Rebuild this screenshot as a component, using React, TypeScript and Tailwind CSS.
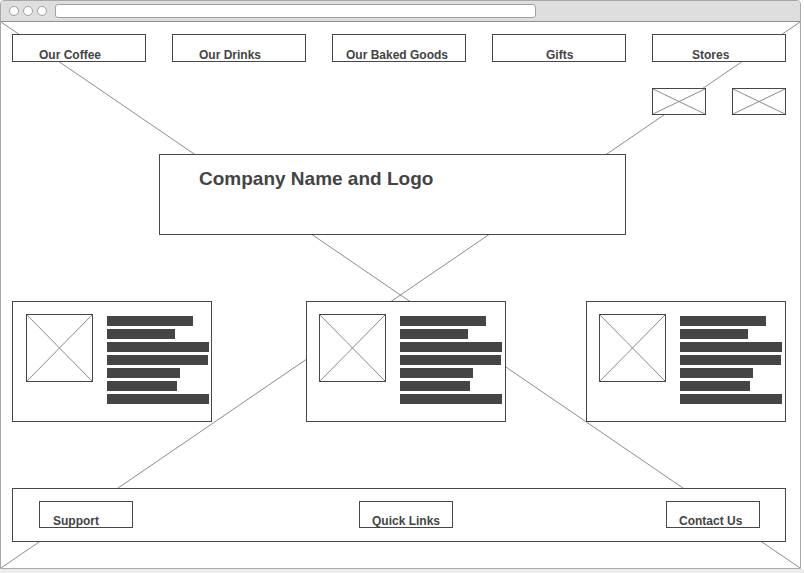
import React from "react";

const font = { fontFamily: '"Liberation Sans", Arial, Helvetica, sans-serif' };

function XBox({ className }: { className: string }) {
  return (
    <div className={`relative border border-[#474747] bg-white ${className}`}>
      <svg className="absolute inset-0 h-full w-full" viewBox="0 0 100 100" preserveAspectRatio="none">
        <line x1="0" y1="0" x2="100" y2="100" stroke="#8a8a8a" strokeWidth="1" vectorEffect="non-scaling-stroke" />
        <line x1="100" y1="0" x2="0" y2="100" stroke="#8a8a8a" strokeWidth="1" vectorEffect="non-scaling-stroke" />
      </svg>
    </div>
  );
}

const navItems: { label: string; pl: string }[] = [
  { label: "Our Coffee", pl: "pl-[26px]" },
  { label: "Our Drinks", pl: "pl-[26px]" },
  { label: "Our Baked Goods", pl: "pl-[13px]" },
  { label: "Gifts", pl: "pl-[53px]" },
  { label: "Stores", pl: "pl-[39px]" },
];

const barWidths = ["w-[86px]", "w-[68px]", "w-[102px]", "w-[101px]", "w-[73px]", "w-[70px]", "w-[102px]"];

function Card({ className, imgMl }: { className: string; imgMl: string }) {
  return (
    <div className={`flex h-[121px] w-[200px] border border-[#474747] bg-white ${className}`}>
      <XBox className={`${imgMl} mt-[12px] h-[68px] w-[67px]`} />
      <div className="ml-[14px] mt-[14px] flex flex-col gap-[3px]">
        {barWidths.map((w, i) => (
          <div key={i} className={`h-[10px] bg-[#454545] ${w}`} />
        ))}
      </div>
    </div>
  );
}

function FooterBtn({ label, pl, className }: { label: string; pl: string; className?: string }) {
  return (
    <div
      className={`h-[27px] w-[94px] border border-[#474747] bg-white ${pl} pt-[12px] text-[12px] font-bold leading-[14px] text-[#444] ${className ?? ""}`}
    >
      {label}
    </div>
  );
}

export default function App() {
  return (
    <div className="h-[573px] w-[804px] overflow-hidden bg-white" style={font}>
      <div className="flex h-[569px] w-[801px] flex-col overflow-hidden rounded-t-[4px] border border-[#a8a8a8]">
        {/* browser chrome */}
        <div className="flex h-[21px] shrink-0 items-center border-b border-[#8f8f8f] bg-[#dedede] pl-[8px]">
          <div className="flex gap-[4px]">
            <div className="h-[10px] w-[10px] rounded-full border border-[#a0a0a0] bg-white" />
            <div className="h-[10px] w-[10px] rounded-full border border-[#a0a0a0] bg-white" />
            <div className="h-[10px] w-[10px] rounded-full border border-[#a0a0a0] bg-white" />
          </div>
          <div className="ml-[8px] h-[14px] w-[481px] rounded-[3px] border border-[#a0a0a0] bg-white" />
        </div>

        {/* content */}
        <div className="relative flex-1 bg-white">
          <svg className="absolute inset-0 h-full w-full" viewBox="0 0 100 100" preserveAspectRatio="none">
            <line x1="0" y1="0" x2="100" y2="100" stroke="#8c8c8c" strokeWidth="1" vectorEffect="non-scaling-stroke" />
            <line x1="100" y1="0" x2="0" y2="100" stroke="#8c8c8c" strokeWidth="1" vectorEffect="non-scaling-stroke" />
          </svg>

          <div className="relative flex flex-col pl-[11px] pt-[12px]">
            {/* nav */}
            <div className="flex gap-[26px]">
              {navItems.map((n) => (
                <div
                  key={n.label}
                  className={`h-[28px] w-[134px] border border-[#474747] bg-white ${n.pl} pt-[13px] text-[12px] font-bold leading-[14px] text-[#444]`}
                >
                  {n.label}
                </div>
              ))}
            </div>

            {/* small images */}
            <div className="mt-[26px] flex justify-end gap-[26px] pr-[14px]">
              <XBox className="h-[27px] w-[54px]" />
              <XBox className="h-[27px] w-[54px]" />
            </div>

            {/* company */}
            <div className="ml-[147px] mt-[39px] h-[81px] w-[467px] border border-[#474747] bg-white pl-[39px] pt-[13px] text-[19px] font-bold leading-[22px] text-[#444]">
              Company Name and Logo
            </div>

            {/* cards */}
            <div className="mt-[66px] flex">
              <Card className="" imgMl="ml-[13px]" />
              <Card className="ml-[94px]" imgMl="ml-[12px]" />
              <Card className="ml-[80px]" imgMl="ml-[12px]" />
            </div>

            {/* footer */}
            <div className="mt-[66px] flex h-[54px] w-[774px] items-start border border-[#474747] bg-white pl-[26px] pt-[12px]">
              <FooterBtn label="Support" pl="pl-[13px]" />
              <FooterBtn label="Quick Links" pl="pl-[12px]" className="ml-[226px]" />
              <FooterBtn label="Contact Us" pl="pl-[12px]" className="ml-[213px]" />
            </div>
          </div>
        </div>
      </div>
      <div className="h-[4px] bg-[#ececec]" />
    </div>
  );
}
